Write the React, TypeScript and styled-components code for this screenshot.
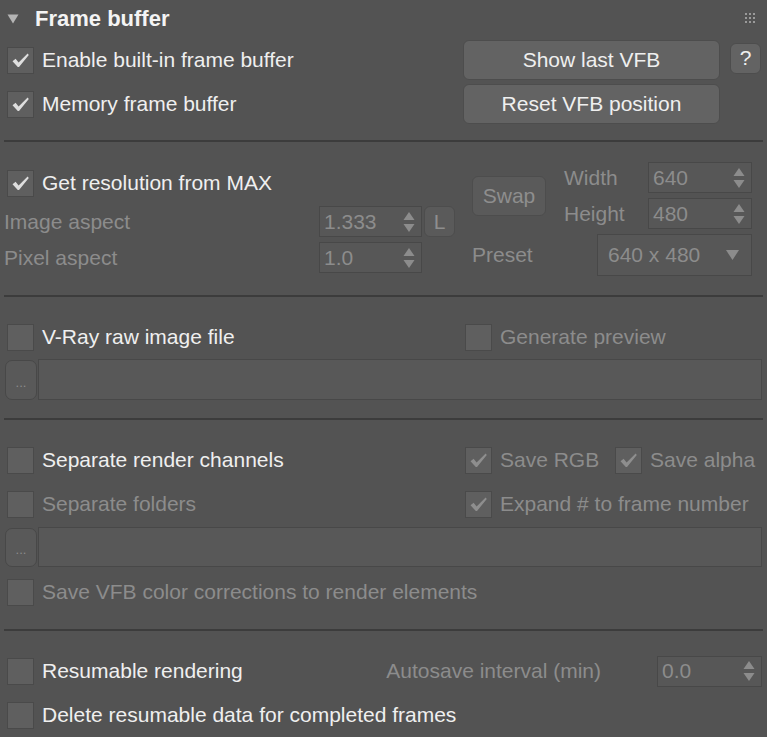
import React from 'react';
import styled, { createGlobalStyle } from 'styled-components';

const GlobalStyle = createGlobalStyle`
  html, body {
    margin: 0;
    padding: 0;
    background: #535353;
  }
  body {
    font-family: "Liberation Sans", Arial, sans-serif;
  }
`;

const Panel = styled.div`
  width: 767px;
  height: 737px;
  overflow: hidden;
  background: #535353;
  color: #efefef;
  font-size: 21px;
`;

const Header = styled.div`
  height: 38px;
  display: flex;
  align-items: center;
  padding: 0 12px 0 7px;
`;

const Title = styled.span`
  margin-left: 16px;
  font-size: 22px;
  font-weight: 700;
  color: #f4f4f4;
`;

const Grip = styled.svg`
  margin-left: auto;
  margin-top: -2px;
`;

const Separator = styled.div<{ $top: number }>`
  height: 2px;
  margin: ${(p) => p.$top}px 4px 0 4px;
  background: #3c3c3c;
`;

const Section = styled.div<{ $top?: number }>`
  padding-top: ${(p) => p.$top ?? 0}px;
`;

const TopGrid = styled.div`
  display: grid;
  grid-template-columns: 1fr 257px 31px;
  grid-auto-rows: 44px;
  column-gap: 10px;
  align-items: center;
  padding: 0 6px 0 7px;
`;

const Button = styled.button<{ $dim?: boolean }>`
  height: 40px;
  box-sizing: border-box;
  border: 1px solid #4d4d4d;
  border-radius: 6px;
  background: #636363;
  color: ${(p) => (p.$dim ? '#8e8e8e' : '#efefef')};
  font-family: inherit;
  font-size: 21px;
  padding: 0;
`;

const HelpButton = styled(Button)`
  height: 31px;
  margin-top: -4px;
`;

const CheckRow = styled.label<{ $indent?: number }>`
  display: flex;
  align-items: center;
  height: 44px;
  margin-left: ${(p) => p.$indent ?? 0}px;
  white-space: nowrap;
`;

const Box = styled.span`
  width: 27px;
  height: 27px;
  box-sizing: border-box;
  border: 1px solid #4a4a4a;
  background: #5f5f5f;
  display: flex;
  align-items: center;
  justify-content: center;
  flex: none;
`;

const Label = styled.span<{ $dim?: boolean }>`
  margin-left: 8px;
  color: ${(p) => (p.$dim ? '#8c8c8c' : '#efefef')};
`;

const FieldLabel = styled.span`
  color: #8c8c8c;
  display: flex;
  align-items: center;
  white-space: nowrap;
`;

const ResRow = styled.div`
  display: flex;
  align-items: flex-start;
  padding-top: 20px;
`;

const ResLeft = styled.div`
  width: 449px;
  margin-right: 19px;
  padding-left: 4px;
  padding-top: 3px;
  display: grid;
  grid-template-columns: 313px 103px 31px;
  grid-template-rows: 36px 31px 31px;
  row-gap: 5px;
  column-gap: 2px;
`;

const ResLeftCheck = styled.div`
  grid-column: 1 / 4;
  display: flex;
  align-items: center;
  margin-left: 3px;
`;

const ResRight = styled.div`
  display: grid;
  grid-template-columns: 92px 84px 104px;
  grid-template-rows: 31px 31px 42px;
  row-gap: 5px;
`;

const SwapButton = styled(Button)`
  grid-row: 1 / 3;
  align-self: center;
  width: 74px;
  background: #5a5a5a;
`;

const LockButton = styled(Button)`
  height: 31px;
  background: #5a5a5a;
`;

const Spinner = styled.div<{ $width?: number }>`
  width: ${(p) => (p.$width ? `${p.$width}px` : 'auto')};
  height: 31px;
  box-sizing: border-box;
  border: 1px solid #484848;
  background: #575757;
  color: #8c8c8c;
  display: flex;
  align-items: center;
  justify-content: space-between;
  padding: 0 6px 0 4px;
`;

const Dropdown = styled.div`
  grid-column: 2 / 4;
  justify-self: end;
  width: 155px;
  height: 42px;
  box-sizing: border-box;
  border: 1px solid #484848;
  background: #575757;
  color: #8c8c8c;
  display: flex;
  align-items: center;
  justify-content: space-between;
  padding: 0 12px 0 10px;
`;

const OptionGrid = styled.div<{ $cols: string }>`
  display: grid;
  grid-template-columns: ${(p) => p.$cols};
  padding-left: 7px;
`;

const PathRow = styled.div<{ $top?: number; $height: number }>`
  display: flex;
  height: ${(p) => p.$height}px;
  margin-top: ${(p) => p.$top ?? 0}px;
  padding: 0 5px;
  gap: 1px;
`;

const BrowseButton = styled.div`
  width: 32px;
  margin-top: 1px;
  box-sizing: border-box;
  border: 1px solid #484848;
  border-radius: 7px;
  background: #595959;
  color: #8c8c8c;
  font-size: 13px;
  display: flex;
  align-items: flex-end;
  justify-content: center;
  padding-bottom: 9px;
`;

const PathField = styled.div`
  flex: 1;
  box-sizing: border-box;
  border: 1px solid #484848;
  background: #585858;
`;

const ResumeRow = styled.div`
  display: flex;
  align-items: center;
  height: 44px;
  padding: 0 5px 0 7px;
`;

const AutosaveLabel = styled(FieldLabel)`
  margin-left: auto;
  margin-right: 56px;
`;

const Check = ({ on, dim }: { on?: boolean; dim?: boolean }) => (
  <Box>
    {on && (
      <svg width="19" height="17" viewBox="0 0 19 17">
        <path
          d="M1.5 9.2 L4.6 6.8 L7.6 10.6 L16.6 1.6 L17.8 3 L8 15 L6.8 15 Z"
          fill={dim ? '#8e8e8e' : '#dedede'}
        />
      </svg>
    )}
  </Box>
);

const CheckOption = ({
  label,
  on,
  dim,
  indent,
}: {
  label: string;
  on?: boolean;
  dim?: boolean;
  indent?: number;
}) => (
  <CheckRow $indent={indent}>
    <Check on={on} dim={dim} />
    <Label $dim={dim}>{label}</Label>
  </CheckRow>
);

const Arrows = () => (
  <svg width="12" height="22" viewBox="0 0 12 22">
    <path d="M6 1 L11.5 9 L0.5 9 Z" fill="#8c8c8c" />
    <path d="M0.5 13 L11.5 13 L6 21 Z" fill="#8c8c8c" />
  </svg>
);

const NumberField = ({ value, width }: { value: string; width?: number }) => (
  <Spinner $width={width}>
    <span>{value}</span>
    <Arrows />
  </Spinner>
);

const Dots = () => (
  <Grip width="10" height="10" viewBox="0 0 10 10">
    {[0, 4, 8].map((y) =>
      [0, 4, 8].map((x) => (
        <rect key={`${x}-${y}`} x={x} y={y} width="2" height="2" fill="#9a9a9a" />
      ))
    )}
  </Grip>
);

export default function App() {
  return (
    <Panel>
      <GlobalStyle />
      <Header>
        <svg width="12" height="10" viewBox="0 0 12 10">
          <path d="M0.5 0.5 L11.5 0.5 L6 9.5 Z" fill="#b4b4b4" />
        </svg>
        <Title>Frame buffer</Title>
        <Dots />
      </Header>

      <TopGrid>
        <CheckOption label="Enable built-in frame buffer" on />
        <Button>Show last VFB</Button>
        <HelpButton>?</HelpButton>
        <CheckOption label="Memory frame buffer" on />
        <Button>Reset VFB position</Button>
      </TopGrid>

      <Separator $top={14} />

      <ResRow>
        <ResLeft>
          <ResLeftCheck>
            <Check on />
            <Label>Get resolution from MAX</Label>
          </ResLeftCheck>
          <FieldLabel>Image aspect</FieldLabel>
          <NumberField value="1.333" />
          <LockButton $dim>L</LockButton>
          <FieldLabel>Pixel aspect</FieldLabel>
          <NumberField value="1.0" />
        </ResLeft>
        <ResRight>
          <SwapButton $dim>Swap</SwapButton>
          <FieldLabel>Width</FieldLabel>
          <NumberField value="640" />
          <FieldLabel>Height</FieldLabel>
          <NumberField value="480" />
          <FieldLabel>Preset</FieldLabel>
          <Dropdown>
            <span>640 x 480</span>
            <svg width="13" height="10" viewBox="0 0 13 10">
              <path d="M0 0 L13 0 L6.5 10 Z" fill="#8c8c8c" />
            </svg>
          </Dropdown>
        </ResRight>
      </ResRow>

      <Separator $top={19} />

      <Section $top={18}>
        <OptionGrid $cols="458px 1fr">
          <CheckOption label="V-Ray raw image file" />
          <CheckOption label="Generate preview" dim />
        </OptionGrid>
        <PathRow $height={41}>
          <BrowseButton>...</BrowseButton>
          <PathField />
        </PathRow>
      </Section>

      <Separator $top={18} />

      <Section $top={18}>
        <OptionGrid $cols="458px 150px 1fr">
          <CheckOption label="Separate render channels" />
          <CheckOption label="Save RGB" on dim />
          <CheckOption label="Save alpha" on dim />
          <CheckOption label="Separate folders" dim />
          <CheckOption label="Expand # to frame number" on dim />
        </OptionGrid>
        <PathRow $top={1} $height={40}>
          <BrowseButton>...</BrowseButton>
          <PathField />
        </PathRow>
        <OptionGrid $cols="1fr" style={{ marginTop: 3 }}>
          <CheckOption label="Save VFB color corrections to render elements" dim />
        </OptionGrid>
      </Section>

      <Separator $top={15} />

      <Section $top={18}>
        <ResumeRow>
          <Check />
          <Label>Resumable rendering</Label>
          <AutosaveLabel>Autosave interval (min)</AutosaveLabel>
          <NumberField value="0.0" width={105} />
        </ResumeRow>
        <OptionGrid $cols="1fr">
          <CheckOption label="Delete resumable data for completed frames" />
        </OptionGrid>
      </Section>
    </Panel>
  );
}
